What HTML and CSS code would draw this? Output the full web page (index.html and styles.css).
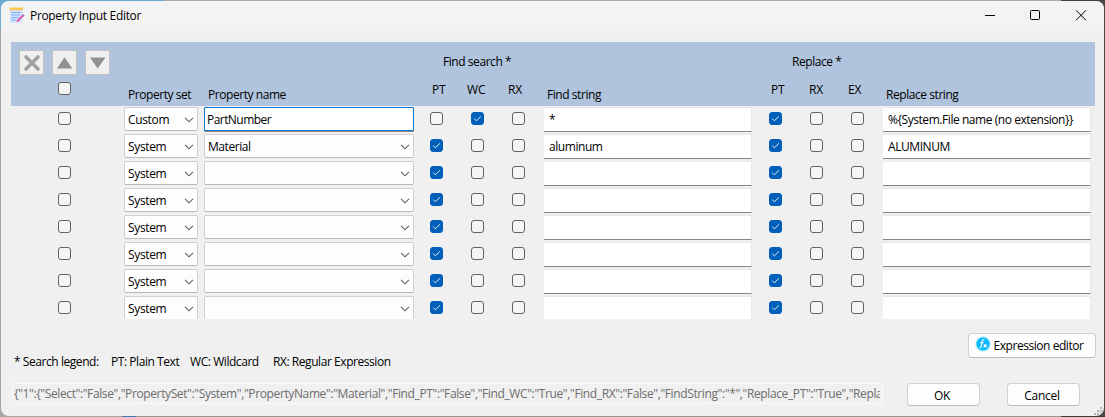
FILE: index.html
```
<!DOCTYPE html>
<html lang="en">
<head>
<meta charset="utf-8">
<title>Property Input Editor</title>
<link rel="stylesheet" href="styles.css">
</head>
<body>
<div class="window">
  <header class="titlebar">
    <svg class="app-icon" width="16" height="17" viewBox="0 0 16 17">
      <rect x="1" y="1" width="12.5" height="15" fill="#d3e3fb"/>
      <rect x="0.5" y="0.5" width="13.5" height="2.8" rx=".6" fill="#fdc453"/>
      <path d="M2 5.5h10M2 8h9M2 10.500h7M2 13h5" stroke="#83aef1" stroke-width="1.1"/>
      <path d="M8 14.500L14.200 8.300" stroke="#d85fae" stroke-width="2.200"/>
      <path d="M13.500 7.500l1.600 1.600" stroke="#8a82a8" stroke-width="1.500"/>
    </svg>
    <h1 class="title"><span>Property Input Editor</span></h1>
    <svg class="controls" width="112" height="14" viewBox="0 0 112 14" fill="none" stroke="#000">
      <path d="M0 7.500h10" shape-rendering="crispEdges"/>
      <rect x="45.500" y="2.500" width="9" height="9" rx="1"/>
      <path d="M91 2.300l10 10M101 2.300l-10 10"/>
    </svg>
  </header>
  <main class="table">
    <div class="head">
      <div class="head-top">
        <div class="tools">
          <button class="tool"><svg width="23" height="23" viewBox="0 0 23 23"><path d="M6 6l12 12M18 6L6 18" stroke="#a0a0a0" stroke-width="3.600" stroke-linecap="round"/></svg></button>
          <button class="tool"><svg width="23" height="23" viewBox="0 0 23 23"><path d="M11.500 6.300L19.300 17.500H4z" fill="#919191"/></svg></button>
          <button class="tool"><svg width="23" height="23" viewBox="0 0 23 23"><path d="M4 6.500h15.500L11.700 17.500z" fill="#919191"/></svg></button>
        </div>
        <div class="group find">Find search *</div>
        <div class="group replace">Replace *</div>
      </div>
      <div class="head-cols grid">
        <span class="check"></span>
        <span class="label low set-label">Property set</span><span class="label low set-label">Property name</span>
        <span class="label code">PT</span><span class="label code wc">WC</span><span class="label code rx">RX</span>
        <span class="label low string">Find string</span>
        <span class="label code">PT</span><span class="label code rrx">RX</span><span class="label code ex">EX</span>
        <span class="label low string">Replace string</span>
      </div>
    </div>
    <div class="rows" id="rows"></div>
  </main>
  <section class="legend-row">
    <div class="legend"><span class="l1">* Search legend:</span><span class="l2">PT: Plain Text</span><span class="l3">WC: Wildcard</span><span class="l4">RX: Regular Expression</span></div>
    <button class="btn expression">
      <svg width="16" height="16" viewBox="0 0 16 16"><circle cx="8" cy="8" r="7.600" fill="#9ee8ff"/><circle cx="8" cy="8" r="6.500" fill="#0bb9fb"/><path d="M9.300 3.800c-1.300-.5-1.800.2-2.100 1.500L6.100 10.500c-.2 1-.6 1.500-1.500 1.200M5.300 6.600h3.200M8.700 8.300l2.900 3M11.700 8.300l-3.200 3" fill="none" stroke="#fff" stroke-width="1.100"/></svg>
      <span>Expression editor</span>
    </button>
  </section>
  <footer class="footer">
    <div class="json"><span>{"1":{"Select":"False","PropertySet":"System","PropertyName":"Material","Find_PT":"False","Find_WC":"True","Find_RX":"False","FindString":"*","Replace_PT":"True","Repla</span></div>
    <button class="btn ok">OK</button>
    <button class="btn cancel">Cancel</button>
  </footer>
  <svg class="grip" width="9" height="9" viewBox="0 0 9 9" fill="#b5b5b5"><path d="M6 0h2v2h-2zM3 3h2v2h-2zM6 3h2v2h-2zM0 6h2v2h-2zM3 6h2v2h-2zM6 6h2v2h-2z"/></svg>
</div>
<script src="rows.js"></script>
</body>
</html>
```
FILE: styles.css
```
* { box-sizing: border-box; }
body {
  margin: 0;
  width: 1105px;
  height: 417px;
  padding: 1px 1px 1px 1px;
  overflow: hidden;
  font: 12px/16px "Open Sans", "Noto Sans", sans-serif;
  letter-spacing: -0.44px;
  color: #000;
  background:
    linear-gradient(90deg, #68a9cf 0 165px, #a9a9a9 165px 1061px, #414141 1061px) 0 0 / 100% 1px no-repeat,
    linear-gradient(90deg, #a9a39f 0 122px, #3d7fb4 122px 136px, #999 136px 1061px, #3b3b3b 1061px) 0 416px / 100% 1px no-repeat,
    linear-gradient(#70aacd 0 30px, #aca6a2 30px) 0 0 / 10px 100% no-repeat,
    #484848;
}
button { font: inherit; letter-spacing: inherit; color: inherit; padding: 0; margin: 0; }
.window {
  position: relative;
  width: 1103px;
  height: 415px;
  background: #f0f0f0;
  border-radius: 8px;
  overflow: hidden;
}
.titlebar {
  height: 30px;
  display: flex;
  align-items: center;
  background: #f3f3f3;
}
.app-icon { margin-left: 8px; margin-top: -1px; }
.title { margin: 0 auto 0 5px; font-size: 12px; font-weight: 400; letter-spacing: -0.33px; }
.controls { margin-right: 7px; margin-top: -2px; }
.table { margin: 11px 8px 0 10px; width: 1084px; height: 277px; overflow: hidden; }
.head { height: 64px; background: #b0c4de; margin-bottom: 1px; }
.head-top { height: 37px; display: flex; }
.tools { width: 432px; display: flex; gap: 8px; padding: 8px 0 0 8px; }
.tool {
  width: 25px;
  height: 25px;
  border: 1px solid #c1c1c1;
  background: #efefef;
}
.tool svg { display: block; }
.group { padding-top: 12px; }
.find { width: 349px; }
.grid {
  display: grid;
  grid-template-columns: 66px 80px 226px 41px 41px 32px 225px 41px 41px 32px 208px;
  padding-left: 47px;
}
.head-cols { height: 27px; align-items: start; }
.label { white-space: nowrap; }
.low { padding-top: 8px; }
.set-label { padding-left: 4px; }
.code { padding: 3px 0 0 2px; letter-spacing: -0.1px; }
.wc { padding-left: 0; margin-left: -4px; }
.rx { margin-left: -6px; }
.rrx { margin-left: -3px; }
.ex { margin-left: -5px; }
.string { padding-left: 3px; }
.head-cols .check { margin-top: 3px; }
.row { height: 27px; align-items: start; }
.check {
  width: 13px;
  height: 13px;
  margin-top: 5px;
  border: 1px solid #626262;
  border-radius: 3px;
  background: #f5f5f5;
}
.check.on { border-color: #005fb8; background: #005fb8; }
.check svg { display: block; }
.select {
  height: 24px;
  display: flex;
  align-items: center;
  justify-content: space-between;
  padding: 2px 3px 0 3px;
  border: 1px solid #d0d0d0;
  border-bottom-color: #bababa;
  border-radius: 2px;
  background: #fdfdfd;
}
.set { width: 74px; }
.set span { letter-spacing: -0.35px; }
.name { width: 210px; }
.field {
  width: 208px;
  height: 25px;
  padding: 4px 4px 3px 5px;
  border: 1px solid #e8e8e8;
  border-left: 0;
  border-bottom-color: #868686;
  background: #fff;
  white-space: nowrap;
}
.field.focus { width: 210px; padding-left: 2px; border: 1px solid #0078d4; border-radius: 1px; height: 24px; box-shadow: 0 1px #868686; letter-spacing: -0.55px; }
.legend-row { height: 39px; display: flex; justify-content: space-between; padding: 14px 8px 0 13px; }
.legend { display: flex; padding-top: 21px; white-space: nowrap; }
.l1 { width: 97px; }
.l2 { width: 79px; }
.l3 { width: 83px; }
.btn {
  display: flex;
  align-items: center;
  justify-content: center;
  border: 1px solid #d0d0d0;
  border-bottom-color: #bababa;
  border-radius: 4px;
  background: #fdfdfd;
}
.expression { width: 128px; height: 25px; gap: 3px; flex: none; white-space: nowrap; padding: 1px 6px 0 0; letter-spacing: -0.45px; }
.expression svg { margin-top: -4px; }
.footer { display: flex; padding: 25px 0 0 11px; }
.json {
  width: 871px;
  height: 21px;
  padding: 2px 2px 0 1px;
  border: 1px solid #fafafa;
  color: #6d6d6d;
  white-space: nowrap;
  letter-spacing: -0.38px;
}
.json span { display: block; overflow: hidden; height: 17px; }
.ok, .cancel { width: 73px; height: 23px; padding-top: 2px; }
.ok { margin-left: 24px; padding-right: 3px; }
.cancel { margin-left: 27px; padding-right: 3px; letter-spacing: -0.25px; }
.grip { position: absolute; right: 1px; bottom: 0; }
```
FILE: rows.js
```
const rows = [
  ["Custom", "PartNumber", [0, 1, 0], "*", "%{System.File name (no extension}}"],
  ["System", "Material", [1, 0, 0], "aluminum", "ALUMINUM"],
  ...Array.from({ length: 6 }, () => ["System", "", [1, 0, 0], "", ""])
];
const tick = '<svg width="11" height="11" viewBox="0 0 11 11"><path d="M2.2 5.600l2.200 2.200 4.500-4.400" fill="none" stroke="#e5f0fa" stroke-width="1"/></svg>';
const chevron = '<svg width="10" height="6" viewBox="0 0 10 6"><path d="M1 .8l4 4 4-4" fill="none" stroke="#606060" stroke-width="1.100"/></svg>';
const check = on => `<span class="check${on ? " on" : ""}">${on ? tick : ""}</span>`;
const select = (kind, text) => `<div class="select ${kind}"><span>${text}</span>${chevron}</div>`;
document.getElementById("rows").innerHTML = rows.map(([set, name, find, a, b], i) =>
  `<div class="row grid">${check(0)}${select("set", set)}${i ? select("name", name) : `<div class="field focus"><span>${name}</span></div>`}` +
  `${find.map(check).join("")}<div class="field"><span>${a}</span></div>${[1, 0, 0].map(check).join("")}<div class="field"><span>${b}</span></div></div>`
).join("");
```
